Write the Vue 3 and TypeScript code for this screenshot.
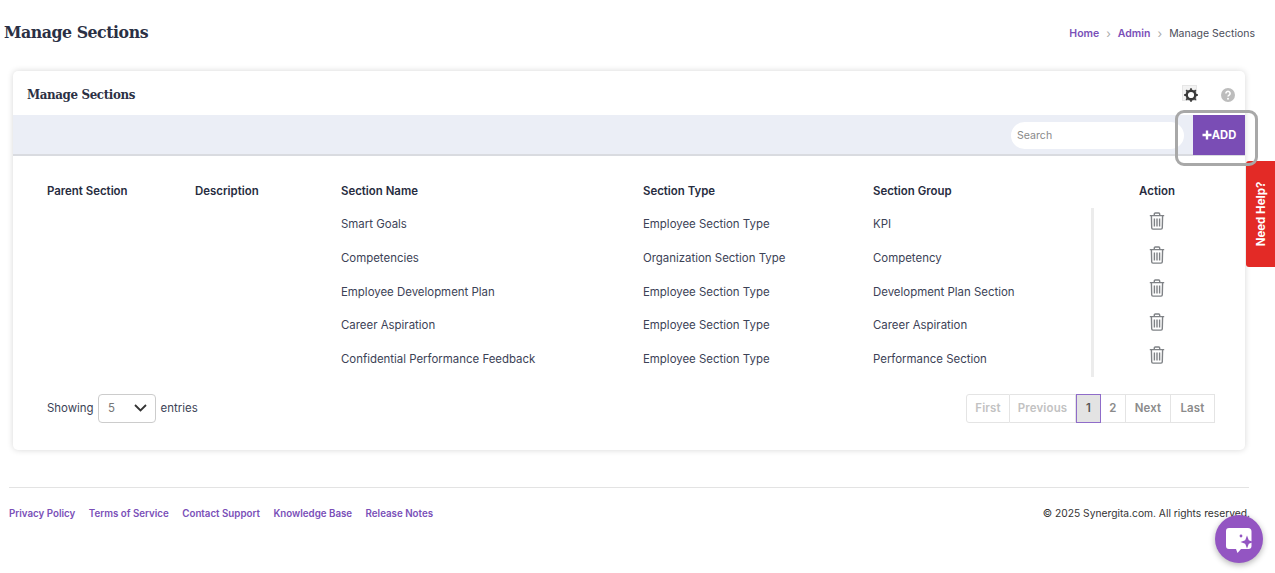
<script setup lang="ts">
interface Row { name: string; type: string; group: string }
const rows: Row[] = [
  { name: 'Smart Goals', type: 'Employee Section Type', group: 'KPI' },
  { name: 'Competencies', type: 'Organization Section Type', group: 'Competency' },
  { name: 'Employee Development Plan', type: 'Employee Section Type', group: 'Development Plan Section' },
  { name: 'Career Aspiration', type: 'Employee Section Type', group: 'Career Aspiration' },
  { name: 'Confidential Performance Feedback', type: 'Employee Section Type', group: 'Performance Section' },
]
const links = ['Privacy Policy', 'Terms of Service', 'Contact Support', 'Knowledge Base', 'Release Notes']
</script>

<template>
  <div class="page">
    <header class="top">
      <h1>Manage Sections</h1>
      <nav class="crumbs">
        <a>Home</a><span class="sep">›</span><a>Admin</a><span class="sep">›</span><span>Manage Sections</span>
      </nav>
    </header>

    <section class="card">
      <div class="card-head">
        <h2>Manage Sections</h2>
        <div class="head-icons">
          <span class="gear-box">
            <svg width="14" height="14" viewBox="0 0 14 14"><g stroke="#3a3a3a" stroke-width="1.800"><path d="M7 .2v2M7 11.800v2M.2 7h2M11.800 7h2M2.200 2.200l1.400 1.400M10.400 10.400l1.400 1.400M11.800 2.200l-1.400 1.400M3.600 10.400l-1.400 1.400"/></g><circle cx="7" cy="7" r="4.300" fill="#fff" stroke="#3a3a3a" stroke-width="2.400"/></svg>
          </span>
          <svg class="help" width="14" height="14" viewBox="0 0 14 14"><circle cx="7" cy="7" r="7" fill="#bdbdbd"/><path d="M4.900 5.400a2.100 2 0 1 1 3.200 1.700c-.7.4-1.100.8-1.100 1.500" fill="none" stroke="#fff" stroke-width="1.600"/><circle cx="7" cy="10.700" r="1" fill="#fff"/></svg>
        </div>
      </div>

      <div class="toolbar">
        <input class="search" placeholder="Search" />
        <button class="add">
          <svg width="10" height="10" viewBox="0 0 10 10"><path d="M5 .5v9M.5 5h9" stroke="#fff" stroke-width="2.400"/></svg>ADD
          <span class="ring"></span>
        </button>
      </div>

      <div class="grid head-row">
        <span>Parent Section</span><span>Description</span><span>Section Name</span><span>Section Type</span><span>Section Group</span><span class="action">Action</span>
      </div>
      <div class="body">
        <div v-for="r in rows" :key="r.name" class="grid row">
          <span></span><span></span><span>{{ r.name }}</span><span>{{ r.type }}</span><span>{{ r.group }}</span>
          <span class="action trash">
            <svg width="16" height="18" viewBox="0 0 16 18" fill="none" stroke="#7f8286" stroke-width="1.400"><path d="M.8 3.600h14.400M5.300 3.400V2a1 1 0 0 1 1-1h3.400a1 1 0 0 1 1 1v1.400M2.400 3.800l.3 12a1.300 1.300 0 0 0 1.300 1.300h8a1.300 1.300 0 0 0 1.300-1.300l.3-12M5.400 6.600v7.800M8 6.600v7.800M10.600 6.600v7.800"/></svg>
          </span>
        </div>
      </div>

      <div class="card-foot">
        <div class="entries">
          <span>Showing</span>
          <span class="select">5
            <svg width="13" height="8" viewBox="0 0 13 8"><path d="M1 1l5.500 5.500L12 1" fill="none" stroke="#333" stroke-width="1.800"/></svg>
          </span>
          <span>entries</span>
        </div>
        <div class="pager">
          <span class="off first w44">First</span><span class="off w66">Previous</span><span class="cur w25">1</span><span class="w25">2</span><span class="w45">Next</span><span class="w44">Last</span>
        </div>
      </div>
    </section>

    <footer class="foot">
      <div class="foot-links"><a v-for="l in links" :key="l">{{ l }}</a></div>
      <span class="copy">© 2025 Synergita.com. All rights reserved.</span>
    </footer>

    <div class="need-help"><span>Need Help?</span></div>
    <button class="chat">
      <svg width="30" height="28" viewBox="0 0 30 28"><path d="M5 3h19a3.500 3.500 0 0 1 3.500 3.500V21a3 3 0 0 1-3 3h-7.500l-3.500 4-1.500-4H5a3 3 0 0 1-3-3V6a3 3 0 0 1 3-3z" fill="#fff"/><path d="M23 10.500l1.800 4.700 4.700 1.800-4.700 1.800L23 23.500l-1.800-4.700-4.700-1.800 4.700-1.800z" fill="#9355c2"/><circle cx="17" cy="11" r="1.400" fill="#9355c2"/></svg>
    </button>
  </div>
</template>

<style>
html, body { margin: 0; background: #fff; }
</style>

<style scoped>
.page {
  position: relative;
  width: 1275px;
  height: 573px;
  overflow: hidden;
  font-family: Inter, "Liberation Sans", sans-serif;
  font-size: 11.430px;
  color: #3c4256;
  background: #fff;
}
.top {
  display: flex;
  justify-content: space-between;
  align-items: center;
  height: 64px;
  padding: 0 20px 0 4px;
}
h1, h2 {
  margin: 0;
  font-family: "DejaVu Serif Condensed", "DejaVu Serif", serif;
  font-stretch: condensed;
  color: #2b3044;
}
h1 { font-size: 17.500px; font-weight: 700; letter-spacing: -0.450px; }
h2 { font-size: 13.200px; font-weight: 700; letter-spacing: -0.380px; padding-top: 2px; }
.crumbs { display: flex; align-items: center; font-size: 10.500px; color: #4a4d5a; padding-top: 2px; }
.crumbs a { color: #7a4fb8; font-weight: 600; }
.sep { margin: 0 7px; color: #aaa; font-size: 12px; }
.card {
  margin: 7px 30px 0 13px;
  height: 379px;
  border-radius: 5px;
  box-shadow: 0 0 6px rgba(0,0,0,.16);
  background: #fff;
}
.card-head {
  height: 44px;
  display: flex;
  align-items: center;
  justify-content: space-between;
  padding: 0 10px 0 14px;
}
.head-icons { display: flex; align-items: center; gap: 21px; padding-top: 4px; }
.gear-box { position: relative; width: 18px; height: 18px; display: flex; align-items: center; justify-content: center; }
.gear-box::before {
  content: "";
  position: absolute;
  left: 0;
  top: -1px;
  width: 13px;
  height: 14px;
  background: #f3f3f3;
  border: 1px solid #e6e6e6;
}
.gear-box svg { position: relative; }
.toolbar {
  height: 39px;
  border-bottom: 2px solid #d9dbe0;
  background: #ebeef6;
  display: flex;
  justify-content: flex-end;
  gap: 9px;
  align-items: flex-start;
}
.search {
  width: 173px;
  height: 27px;
  margin-top: 7px;
  padding: 0 6px;
  box-sizing: border-box;
  border: 0;
  outline: 0;
  border-radius: 14px;
  background: #fff;
  font: 10.600px Inter, sans-serif;
}
.search::placeholder { color: #8a8a8a; }
.add {
  position: relative;
  width: 52px;
  height: 40px;
  border: 0;
  padding: 0;
  background: #7a4db5;
  color: #fff;
  font: 700 11.200px Inter, sans-serif;
  display: flex;
  align-items: center;
  justify-content: center;
}
.ring {
  position: absolute;
  z-index: 2;
  left: -18px;
  top: -5px;
  width: 83px;
  height: 56px;
  box-sizing: border-box;
  border: 3px solid #a8a8a8;
  border-radius: 9px;
}
.grid {
  display: grid;
  grid-template-columns: 148px 146px 302px 230px 218px 132px;
  padding-left: 34px;
  align-items: center;
}
.head-row { height: 51.700px; font-weight: 600; color: #272c40; padding-top: 19px; box-sizing: border-box; }
.action { text-align: center; }
.body {
  height: 169.300px;
  position: relative;
}
.body::after {
  content: "";
  position: absolute;
  left: 1078px;
  top: 0;
  bottom: 0;
  width: 3px;
  background: #ececec;
}
.row { height: 33.600px; }
.trash { display: flex; justify-content: center; padding-bottom: 7px; }
.card-foot {
  display: flex;
  justify-content: space-between;
  align-items: center;
  padding: 17px 30px 0 34px;
}
.entries { display: flex; align-items: center; gap: 4.500px; }
.select {
  width: 58px;
  height: 29px;
  box-sizing: border-box;
  border: 1px solid #ccc;
  border-radius: 4px;
  display: flex;
  align-items: center;
  justify-content: space-between;
  padding: 0 8px 0 9px;
  color: #777;
}
.pager { display: flex; height: 28.500px; font-weight: 600; color: #8b8b8b; letter-spacing: .2px; }
.pager span {
  box-sizing: border-box;
  justify-content: center;
  display: flex;
  align-items: center;
  border: 1px solid #e4e4e4;
  border-left-width: 0;
}
.pager .w44 { width: 44px; }
.pager .w45 { width: 45px; }
.pager .w66 { width: 66px; }
.pager .w25 { width: 25px; }
.pager .first { border-left-width: 1px; border-radius: 3px 0 0 3px; }
.pager .off { color: #c2c2c2; }
.pager .cur { background: #e3e3e3; border: 1px solid #8f6cc9; color: #555; }
.foot {
  margin: 37px 26px 0 9px;
  padding-top: 19px;
  border-top: 1px solid #e3e3e3;
  display: flex;
  justify-content: space-between;
  align-items: center;
}
.foot-links { display: flex; gap: 13.500px; font-size: 9.750px; font-weight: 600; color: #7a4fb8; }
.copy { font-size: 10.250px; color: #333; margin-right: -1px; }
.need-help {
  position: absolute;
  left: 1246px;
  top: 161px;
  width: 29px;
  height: 106px;
  padding-left: 2px;
  box-sizing: border-box;
  background: #e32a26;
  border-radius: 3px 0 0 3px;
  display: flex;
  align-items: center;
  justify-content: center;
}
.need-help span {
  transform: rotate(-90deg);
  white-space: nowrap;
  color: #fff;
  font-weight: 700;
  font-size: 11.500px;
}
.chat {
  position: absolute;
  left: 1215px;
  top: 515px;
  width: 48px;
  height: 48px;
  border: 0;
  padding: 0;
  border-radius: 50%;
  background: #9355c2;
  box-shadow: 0 2px 6px rgba(0,0,0,.3);
  display: flex;
  align-items: center;
  justify-content: center;
}
</style>
